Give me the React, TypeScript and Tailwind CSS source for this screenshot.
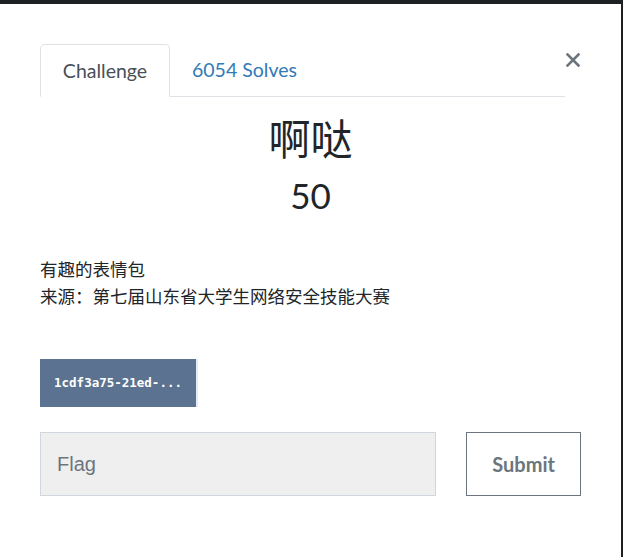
import React from 'react';

const latin = "font-['Lato','Noto_Sans_CJK_SC',sans-serif]";

export default function App() {
    return (
        <div className="w-[623px] h-[557px] bg-[#1e2124] pt-[4px] pr-[2px] overflow-hidden">
            <div className={`relative h-full bg-white px-[40px] pt-[40px] text-[#212529] ${latin}`}>
                {/* close */}
                <button className="absolute right-[41px] top-[49px] text-[#6c757d]">
                    <svg width="14" height="14" viewBox="0 0 14 14">
                        <path d="M1.5 1.5 L12.5 12.5 M12.5 1.5 L1.5 12.5" stroke="currentColor" strokeWidth="2.6" strokeLinecap="square" />
                    </svg>
                </button>

                {/* tabs */}
                <div className="mr-[16px] flex h-[53px] items-end border-b border-[#dee2e6]">
                    <div className="-mb-px flex h-[53px] w-[130px] items-center justify-center rounded-t-[5px] border border-b-white border-[#dee2e6] bg-white text-[19.5px] text-[#495057]">
                        Challenge
                    </div>
                    <div className="flex h-[52px] items-center px-[22px] text-[19.5px] text-[#337ab7]">
                        6054 Solves
                    </div>
                </div>

                {/* title */}
                <div className="mt-[14px] flex flex-col items-center">
                    <h2 className="text-[42px] leading-[52px] font-['Noto_Sans_CJK_SC',sans-serif] font-normal">啊哒</h2>
                    <h3 className="mt-[10px] text-[35px] leading-[44px]">50</h3>
                </div>

                {/* description */}
                <div className="mt-[38px] text-[17.5px] leading-[27px] font-['Noto_Sans_CJK_SC',sans-serif]">
                    <p>有趣的表情包</p>
                    <p>来源：第七届山东省大学生网络安全技能大赛</p>
                </div>

                {/* file */}
                <div className="mt-[50px] flex">
                    <button className="h-[48px] w-[158px] bg-[#5b7290] text-[12.5px] font-bold text-white font-['DejaVu_Sans_Mono',monospace] border-r-2 border-r-[#e3ecf6]">
                        1cdf3a75-21ed-...
                    </button>
                </div>

                {/* flag */}
                <div className="mt-[25px] flex items-start">
                    <input
                        placeholder="Flag"
                        className="h-[64px] w-[397px] border border-[#cfd6dd] bg-[#efefef] px-[16px] text-[20px] font-['Liberation_Sans',sans-serif] placeholder:text-[#6c757d] outline-none"
                    />
                    <button className="ml-[30px] h-[64px] w-[115px] border border-[#6c757d] text-[20px] font-bold text-[#6c757d]">
                        Submit
                    </button>
                </div>
            </div>
        </div>
    );
}
